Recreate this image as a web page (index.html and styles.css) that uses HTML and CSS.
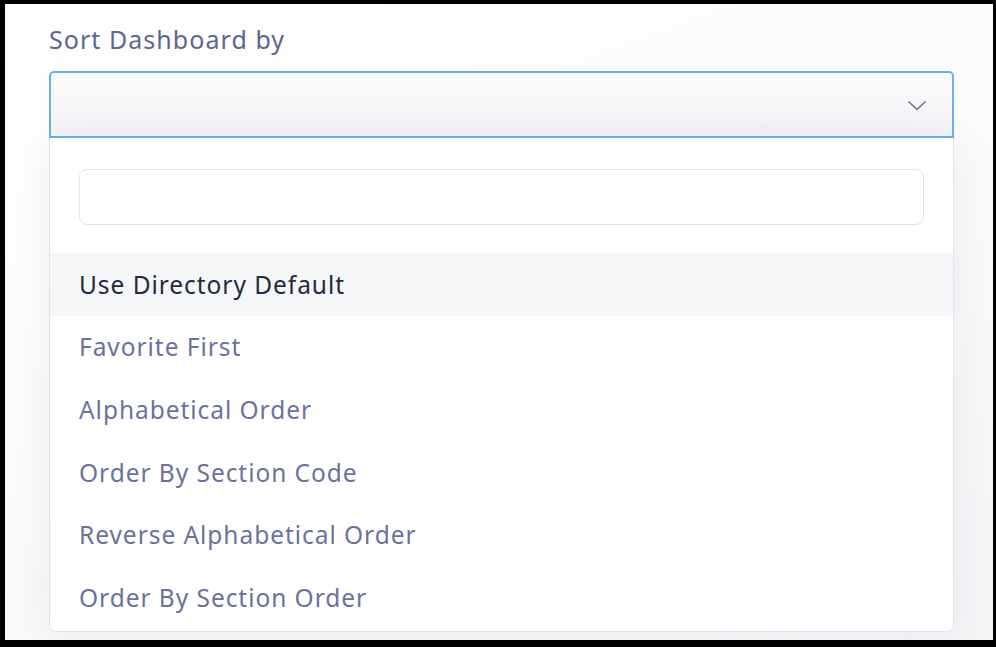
FILE: index.html
```html
<!DOCTYPE html>
<html>
<head>
<meta charset="utf-8">
<link rel="stylesheet" href="styles.css">
</head>
<body>
<div class="frame">
  <div class="field">
    <div class="label">Sort Dashboard by</div>
    <div class="select">
      <svg class="chev" width="20" height="12" viewBox="0 0 20 12"><path d="M1.5 1.5 L10 9.5 L18.5 1.5" fill="none" stroke="#6a7097" stroke-width="1.6"/></svg>
    </div>
    <div class="menu">
      <div class="search-wrap"><div class="search"></div></div>
      <ul class="options">
        <li class="opt active">Use Directory Default</li>
        <li class="opt">Favorite First</li>
        <li class="opt">Alphabetical Order</li>
        <li class="opt">Order By Section Code</li>
        <li class="opt">Reverse Alphabetical Order</li>
        <li class="opt">Order By Section Order</li>
      </ul>
    </div>
  </div>
</div>
</body>
</html>
```

FILE: styles.css
```css
html, body { margin: 0; padding: 0; }
body {
  width: 996px;
  height: 647px;
  font-family: "Noto Sans", "Open Sans", sans-serif;
  background: #000;
}
.frame {
  box-sizing: border-box;
  width: 996px;
  height: 647px;
  border-style: solid;
  border-color: #000;
  border-width: 4px 3px 7px 5px;
  background: linear-gradient(160deg, #ffffff 0%, #fbfbfc 45%, #f4f4f7 100%);
  padding: 0 39px 0 44px;
  overflow: hidden;
}
.field { display: flex; flex-direction: column; }
.label {
  font-size: 25px;
  line-height: 34px;
  letter-spacing: 1.05px;
  color: #5d6690;
  margin-top: 18px;
  margin-bottom: 15px;
}
.select {
  box-sizing: border-box;
  height: 67px;
  border: 2px solid #6aafe8;
  border-radius: 5px 5px 0 0;
  background: linear-gradient(180deg, #fbfbfc 0%, #f3f3f6 100%);
  display: flex;
  align-items: center;
  justify-content: flex-end;
  padding-right: 25px;
}
.chev { margin-top: 2px; }
.menu {
  box-sizing: border-box;
  background: #fff;
  border: 1px solid #e3e3ea;
  border-top: none;
  border-radius: 0 0 7px 7px;
  box-shadow: 0 0 40px rgba(40, 40, 80, 0.06);
  padding-bottom: 2px;
}
.search-wrap { padding: 31px 29px 28px 29px; }
.search {
  height: 54px;
  border: 1px solid #e3e3ea;
  border-radius: 8px;
  background: #fff;
}
.options { list-style: none; margin: 0; padding: 0; }
.opt {
  height: 62.6px;
  display: flex;
  align-items: center;
  padding-left: 29px;
  font-size: 24.5px;
  letter-spacing: 0.95px;
  color: #6b729c;
}
.opt.active {
  background: #f5f6f8;
  color: #262a3c;
}
```
